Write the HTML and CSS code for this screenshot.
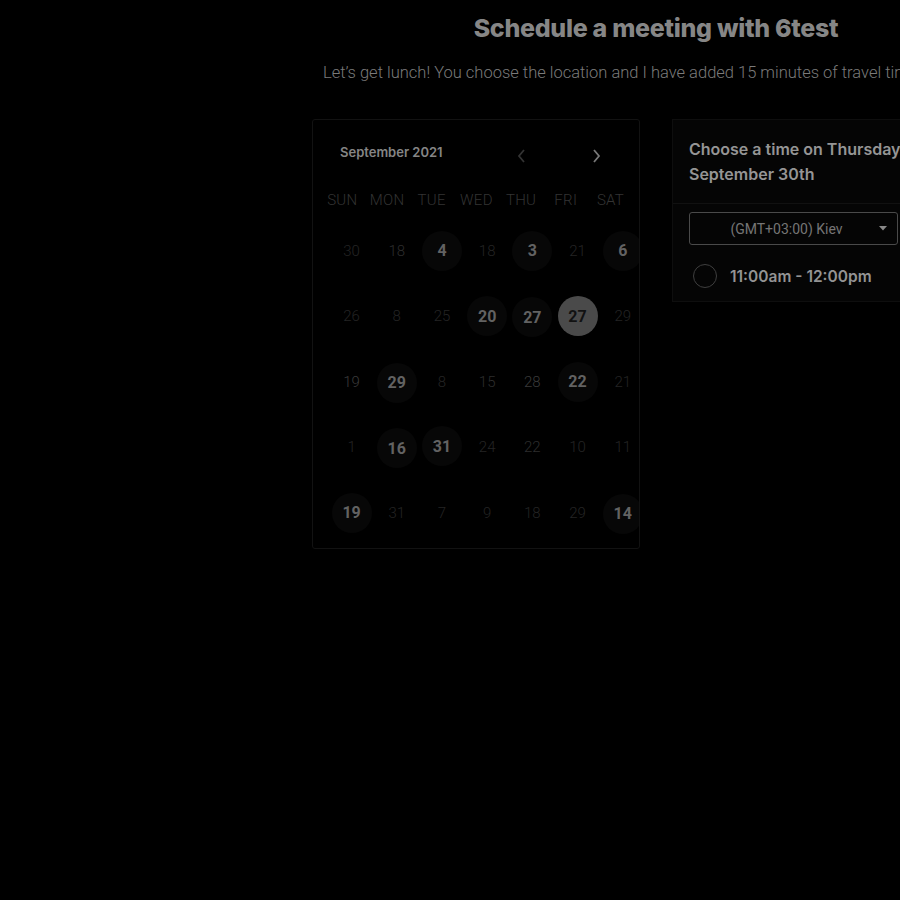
FILE: index.html
```html
<!DOCTYPE html>
<html>
<head>
<meta charset="utf-8">
<link rel="stylesheet" href="styles.css">
</head>
<body>
<main class="page">
  <h1 class="title">Schedule a meeting with 6test</h1>
  <p class="subtitle">Let’s get lunch! You choose the location and I have added 15 minutes of travel time before and after.</p>
  <div class="content">
    <section class="calendar">
      <div class="cal-head">
        <span class="month">September 2021</span>
        <div class="navs">
          <svg class="nav prev" width="12" height="16" viewBox="0 0 12 16"><path d="M8 2 L3 8 L8 14" fill="none" stroke="currentColor" stroke-width="1.8"/></svg>
          <svg class="nav next" width="12" height="16" viewBox="0 0 12 16"><path d="M4 2 L9 8 L4 14" fill="none" stroke="currentColor" stroke-width="1.8"/></svg>
        </div>
      </div>
      <div class="weekdays">
        <span>SUN</span><span>MON</span><span>TUE</span><span>WED</span><span>THU</span><span>FRI</span><span>SAT</span>
      </div>
      <div class="days">
        <span class="d">30</span><span class="d d2">18</span><span class="d on">4</span><span class="d">18</span><span class="d on">3</span><span class="d">21</span><span class="d on">6</span>
        <span class="d">26</span><span class="d">8</span><span class="d">25</span><span class="d on">20</span><span class="d on low">27</span><span class="d sel">27</span><span class="d">29</span>
        <span class="d d3">19</span><span class="d on low">29</span><span class="d">8</span><span class="d d2">15</span><span class="d d3">28</span><span class="d on">22</span><span class="d">21</span>
        <span class="d">1</span><span class="d on low">16</span><span class="d on high">31</span><span class="d">24</span><span class="d d2">22</span><span class="d">10</span><span class="d">11</span>
        <span class="d on">19</span><span class="d">31</span><span class="d">7</span><span class="d">9</span><span class="d">18</span><span class="d">29</span><span class="d on low">14</span>
      </div>
    </section>
    <section class="times">
      <div class="times-head">Choose a time on Thursday,<br>September 30th</div>
      <div class="times-body">
        <div class="tz">
          <span class="tz-label">(GMT+03:00) Kiev</span>
          <svg class="caret" width="8" height="5" viewBox="0 0 8 5"><path d="M0 0 H8 L4 4.5 Z" fill="currentColor"/></svg>
        </div>
        <div class="slot">
          <span class="radio"></span>
          <span class="slot-label">11:00am - 12:00pm</span>
        </div>
      </div>
    </section>
  </div>
</main>
</body>
</html>
```
FILE: styles.css
```css
html, body {
  margin: 0;
  padding: 0;
  background: #000;
  overflow: hidden;
  width: 900px;
  height: 900px;
}
.page {
  margin-left: 312px;
  width: 688px;
  font-family: Inter, "Noto Sans", sans-serif;
}
.title {
  margin: 0;
  padding-top: 13px;
  text-align: center;
  font-size: 25px;
  line-height: 31px;
  font-weight: 800;
  color: #868686;
  letter-spacing: -0.3px;
}
.subtitle {
  margin: 18px 0 0 11px;
  font-family: Roboto, sans-serif;
  font-weight: 300;
  font-size: 16.5px;
  line-height: 22px;
  color: #7a7a7a;
  white-space: nowrap;
}
.content {
  display: flex;
  align-items: flex-start;
  gap: 32px;
  margin-top: 35px;
}
.calendar {
  width: 326px;
  height: 428px;
  border: 1px solid #121212;
  border-radius: 3px;
  background: #000;
  overflow: hidden;
  flex: none;
}
.cal-head {
  display: flex;
  align-items: center;
  height: 30px;
  margin-top: 17px;
  padding-left: 27px;
}
.month {
  font-size: 13px;
  font-weight: 600;
  color: #858585;
  width: 176px;
}
.navs {
  display: flex;
  gap: 62px;
  padding-top: 8px;
}
.nav.prev { color: #333; }
.nav.next { color: #777; }
.weekdays {
  display: grid;
  grid-template-columns: repeat(7, 44.7px);
  margin: 24px 0 0 7px;
  font-family: Roboto, sans-serif;
  font-weight: 300;
  font-size: 15px;
  line-height: 18px;
  color: #333;
  text-align: center;
  letter-spacing: 0.3px;
}
.days {
  display: grid;
  grid-template-columns: repeat(7, 45.2px);
  grid-auto-rows: 65.5px;
  margin: 9px 0 0 16px;
  font-family: Roboto, sans-serif;
  font-size: 15px;
}
.d {
  display: flex;
  align-items: center;
  justify-content: center;
  font-weight: 300;
  color: #242424;
}
.d.d2 { color: #2d2d2d; }
.d.d3 { color: #3a3a3a; }
.d.on, .d.sel {
  width: 40px;
  height: 40px;
  border-radius: 50%;
  justify-self: center;
  align-self: center;
  font-family: Roboto, sans-serif;
  font-weight: 700;
  font-size: 16px;
}
.d.on {
  background: #070707;
  color: #626262;
}
.d.on.low { margin-top: 2px; }
.d.on.high { margin-top: -2px; }
.d.sel {
  background: #4a4a4a;
  color: #121212;
}
.times {
  flex: none;
  width: 260px;
  background: #050505;
  border: 1px solid #0e0e0e;
  border-right: none;
}
.times-head {
  padding: 17px 0 16px 16px;
  font-size: 16px;
  line-height: 25px;
  font-weight: 600;
  color: #959595;
  border-bottom: 1px solid #111;
  white-space: nowrap;
}
.times-body {
  padding: 8px 0 0 16px;
}
.tz {
  position: relative;
  height: 31px;
  border: 1px solid #4a4a4a;
  border-radius: 3px;
  display: flex;
  align-items: center;
  justify-content: center;
  padding-right: 14px;
  box-sizing: content-box;
  width: 193px;
}
.tz-label {
  font-family: Roboto, sans-serif;
  font-size: 14px;
  color: #757575;
}
.caret {
  position: absolute;
  right: 10px;
  top: 13px;
  color: #888;
}
.slot {
  display: flex;
  align-items: center;
  height: 50px;
  padding-top: 6px;
}
.radio {
  width: 22px;
  height: 22px;
  border: 1.5px solid #3f3f3f;
  border-radius: 50%;
  margin-left: 4px;
}
.slot-label {
  margin-left: 13px;
  font-size: 15.5px;
  font-weight: 600;
  color: #939393;
}
```
